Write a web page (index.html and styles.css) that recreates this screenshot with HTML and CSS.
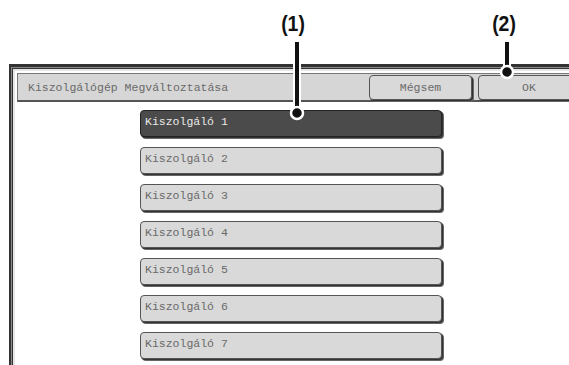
FILE: index.html
```html
<!DOCTYPE html>
<html lang="en">
<head>
  <meta charset="UTF-8" />
  <title>Kiszolgálógép Megváltoztatása</title>
  <link rel="stylesheet" href="styles.css">
</head>
<body>

<div class="stage">
  <div class="frame">
    <div class="title-bar">
      <div class="title-text">Kiszolgálógép Megváltoztatása</div>
      <button type="button" class="key key-cancel">Mégsem</button>
      <button type="button" class="key key-ok">OK</button>
    </div>
    <div class="server-list">
      <button type="button" class="key server selected">Kiszolgáló 1</button>
      <button type="button" class="key server">Kiszolgáló 2</button>
      <button type="button" class="key server">Kiszolgáló 3</button>
      <button type="button" class="key server">Kiszolgáló 4</button>
      <button type="button" class="key server">Kiszolgáló 5</button>
      <button type="button" class="key server">Kiszolgáló 6</button>
      <button type="button" class="key server">Kiszolgáló 7</button>
    </div>
  </div>

  <!-- callouts -->
  <div class="callout-label label-1">(1)</div>
  <div class="callout-label label-2">(2)</div>
  <svg class="callout-lines" width="569" height="365" viewBox="0 0 569 365">
    <g stroke="#fff" stroke-width="8" fill="none">
      <line x1="297" y1="42" x2="297" y2="112" />
      <line x1="507" y1="42" x2="507" y2="72" />
    </g>
    <g stroke="#111" stroke-width="4">
      <line x1="297" y1="42" x2="297" y2="112" />
      <line x1="507" y1="42" x2="507" y2="72" />
    </g>
    <circle cx="297" cy="113" r="6" fill="#111" stroke="#fff" stroke-width="2.5" />
    <circle cx="507" cy="72" r="6" fill="#111" stroke="#fff" stroke-width="2.5" />
  </svg>
</div>

</body>
</html>
```

FILE: styles.css
```css
body {
  margin: 0;
  background: #fff;
  overflow: hidden;
}
.stage {
  position: relative;
  width: 569px;
  height: 365px;
  overflow: hidden;
  padding-top: 64px;
  box-sizing: border-box;
}
.frame {
  margin-left: 9px;
  width: 580px;
  height: 320px;
  border-top: 3px solid #333;
  border-left: 2px solid #333;
  box-shadow: inset 1px 1px 0 #8a8a8a, inset 2px 2px 0 #333, inset 4px 4px 0 #e6e6e6;
  background: #fff;
  padding: 6px 0 0 6px;
  box-sizing: border-box;
}
.title-bar {
  display: flex;
  align-items: flex-start;
  height: 29px;
  background: #d6d6d6;
  border-top: 1px solid #777;
  border-left: 1px solid #777;
  border-bottom: 2px solid #555;
  box-sizing: border-box;
  padding-top: 1px;
}
.title-text {
  flex: 1;
  font-family: "Liberation Mono", "Courier New", monospace;
  font-size: 11.5px;
  color: #6a6a6a;
  padding: 6px 0 0 10px;
}
.key {
  font-family: "Liberation Mono", "Courier New", monospace;
  font-size: 11.5px;
  color: #6a6a6a;
  background: #d9d9d9;
  border: 1px solid #555;
  border-radius: 4px;
  box-shadow: 1px 1px 0 #333, 2px 2px 0 #666;
  padding: 0;
  margin: 0;
  box-sizing: border-box;
}
.key-cancel {
  width: 103px;
  height: 25px;
  margin-right: 6px;
}
.key-ok {
  width: 102px;
  height: 25px;
  margin-right: 9px;
}
.server-list {
  display: flex;
  flex-direction: column;
  gap: 10px;
  margin: 8px 0 0 123px;
}
.server {
  width: 302px;
  height: 27px;
  text-align: left;
  padding: 0 0 4px 4px;
}
.server.selected {
  background: #4b4b4b;
  color: #e8e8e8;
  border-color: #222;
}
.callout-label {
  position: absolute;
  top: 11px;
  width: 40px;
  text-align: center;
  font-family: "Liberation Sans", Arial, sans-serif;
  font-weight: bold;
  font-size: 22px;
  color: #111;
  transform: scaleX(0.88);
}
.label-1 {
  left: 273px;
}
.label-2 {
  left: 484px;
}
.callout-lines {
  position: absolute;
  left: 0;
  top: 0;
}
```
